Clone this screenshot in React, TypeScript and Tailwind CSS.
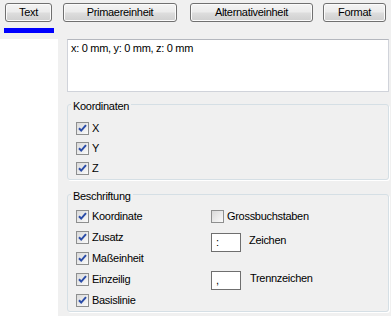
import { useId } from "react";

function Button({ label, width, className = "" }: { label: string; width: string; className?: string }) {
  return (
    <button
      className={`${width} ${className} h-[19px] shrink-0 rounded-[3px] border border-[#707070] bg-[linear-gradient(to_bottom,#f4f4f4_0%,#ebebeb_48%,#dddddd_52%,#cfcfcf_100%)] shadow-[inset_0_0_0_1px_#fbfbfb] leading-[13px] text-black`}
    >
      {label}
    </button>
  );
}

function CheckBox({ checked }: { checked: boolean }) {
  const id = useId();
  return (
    <svg width="13" height="13" viewBox="0 0 13 13" className="shrink-0">
      <defs>
        <linearGradient id={id} x1="0" y1="0" x2="1" y2="1">
          <stop offset="0" stopColor="#d8d8d8" />
          <stop offset="1" stopColor="#fcfcfc" />
        </linearGradient>
      </defs>
      <rect x="0.5" y="0.5" width="12" height="12" fill={`url(#${id})`} stroke="#8e8f8f" />
      {checked && (
        <path d="M3 6.2 L5.2 8.6 L10 3.2" fill="none" stroke="#2a4ca8" strokeWidth="2" />
      )}
    </svg>
  );
}

function CheckRow({ label, checked = true, h }: { label: string; checked?: boolean; h: string }) {
  return (
    <div className={`flex items-center gap-[3px] ${h}`}>
      <CheckBox checked={checked} />
      <span className="leading-[13px]">{label}</span>
    </div>
  );
}

export default function App() {
  return (
    <div className="flex h-[316px] w-[391px] flex-col overflow-hidden bg-[#f0f0f0] font-['Liberation_Sans',Arial,sans-serif] text-[11px] tracking-[-0.3px] text-black">
      <div className="flex pt-[3px]">
        <Button label="Text" width="w-[47px]" className="ml-[5px]" />
        <Button label="Primaereinheit" width="w-[114px]" className="ml-[11px]" />
        <Button label="Alternativeinheit" width="w-[123px]" className="ml-[13px]" />
        <Button label="Format" width="w-[63px]" className="ml-[10px]" />
      </div>
      <div className="ml-[4px] mt-[6px] h-[5px] w-[50px] bg-[#0000ff]" />

      <div className="mt-[6px] flex flex-1">
        <div className="w-[58px] bg-white" />
        <div className="flex-1 pl-[9px] pr-[2px]">
          <div className="h-[53px] border border-[#d0d3da] border-t-[#b4b7be] bg-white pl-[3px] pt-[2px] leading-[13px]">
            x: 0 mm, y: 0 mm, z: 0 mm
          </div>

          <fieldset className="mt-[3px] rounded-[3px] border border-[#d5dfe5] shadow-[1px_1px_0_#ffffff]">
            <legend className="ml-[3px] px-[2px] pt-[5px] leading-[13px]">Koordinaten</legend>
            <div className="pb-[1px] pl-[8px] pt-[5px]">
              <CheckRow label="X" h="h-[20px]" />
              <CheckRow label="Y" h="h-[20px]" />
              <CheckRow label="Z" h="h-[20px]" />
            </div>
          </fieldset>

          <fieldset className="mt-[5px] rounded-[3px] border border-[#d5dfe5] shadow-[1px_1px_0_#ffffff]">
            <legend className="ml-[3px] px-[2px] pt-[5px] leading-[13px]">Beschriftung</legend>
            <div className="flex pl-[8px] pt-[3px]">
              <div className="w-[135px]">
                <CheckRow label="Koordinate" h="h-[21px]" />
                <CheckRow label="Zusatz" h="h-[21px]" />
                <CheckRow label="Maßeinheit" h="h-[21px]" />
                <CheckRow label="Einzeilig" h="h-[21px]" />
                <CheckRow label="Basislinie" h="h-[21px]" />
              </div>
              <div className="flex flex-col">
                <CheckRow label="Grossbuchstaben" checked={false} h="h-[21px]" />
                <div className="mt-[6px] flex items-start">
                  <div className="h-[19px] w-[30px] border border-[#6f6f6f] bg-white pl-[4px] leading-[17px]">:</div>
                  <span className="ml-[8px] mt-[1px] leading-[13px]">Zeichen</span>
                </div>
                <div className="mt-[19px] flex items-start">
                  <div className="h-[19px] w-[30px] border border-[#6f6f6f] bg-white pl-[4px] leading-[17px]">,</div>
                  <span className="ml-[9px] mt-[1px] leading-[13px]">Trennzeichen</span>
                </div>
              </div>
            </div>
          </fieldset>
        </div>
      </div>
    </div>
  );
}
